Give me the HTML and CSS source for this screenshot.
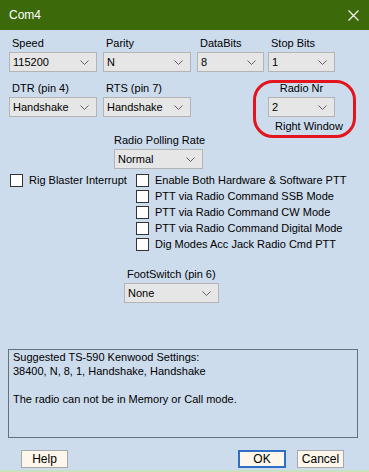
FILE: index.html
```html
<!DOCTYPE HTML>
<html>
<head>
    <meta charset="utf-8">
    <title>Com4</title>
    <link rel="stylesheet" href="styles.css">
</head>
<body>
    <div class="window">
        <div class="titlebar">
            <span class="title">Com4</span>
            <svg class="close" width="11" height="11" viewBox="0 0 11 11"><path d="M0.5 0.5 L10.5 10.5 M10.5 0.5 L0.5 10.5" stroke="#fff" stroke-width="1.1" fill="none"/></svg>
        </div>

        <div class="content">
            <!-- port settings -->
            <div class="row row-top">
                <div class="field f-speed">
                    <div class="label">Speed</div>
                    <div class="combo">115200<svg class="chev" width="9" height="5" viewBox="0 0 9 5"><path d="M0.5 0.5 L4.5 4.5 L8.5 0.5" stroke="#606060" fill="none"/></svg></div>
                </div>
                <div class="field f-parity">
                    <div class="label">Parity</div>
                    <div class="combo">N<svg class="chev" width="9" height="5" viewBox="0 0 9 5"><path d="M0.5 0.5 L4.5 4.5 L8.5 0.5" stroke="#606060" fill="none"/></svg></div>
                </div>
                <div class="field f-data">
                    <div class="label">DataBits</div>
                    <div class="combo">8<svg class="chev" width="9" height="5" viewBox="0 0 9 5"><path d="M0.5 0.5 L4.5 4.5 L8.5 0.5" stroke="#606060" fill="none"/></svg></div>
                </div>
                <div class="field f-stop">
                    <div class="label">Stop Bits</div>
                    <div class="combo">1<svg class="chev" width="9" height="5" viewBox="0 0 9 5"><path d="M0.5 0.5 L4.5 4.5 L8.5 0.5" stroke="#606060" fill="none"/></svg></div>
                </div>
            </div>

            <div class="row row-mid">
                <div class="field f-speed">
                    <div class="label">DTR (pin 4)</div>
                    <div class="combo">Handshake<svg class="chev" width="9" height="5" viewBox="0 0 9 5"><path d="M0.5 0.5 L4.5 4.5 L8.5 0.5" stroke="#606060" fill="none"/></svg></div>
                </div>
                <div class="field f-parity">
                    <div class="label">RTS (pin 7)</div>
                    <div class="combo">Handshake<svg class="chev" width="9" height="5" viewBox="0 0 9 5"><path d="M0.5 0.5 L4.5 4.5 L8.5 0.5" stroke="#606060" fill="none"/></svg></div>
                </div>
                <div class="field f-radio">
                    <div class="label center">Radio Nr</div>
                    <div class="combo">2<svg class="chev" width="9" height="5" viewBox="0 0 9 5"><path d="M0.5 0.5 L4.5 4.5 L8.5 0.5" stroke="#606060" fill="none"/></svg></div>
                    <div class="label side">Right Window</div>
                    <div class="ring"></div>
                </div>
            </div>

            <div class="field f-poll">
                <div class="label center">Radio Polling Rate</div>
                <div class="combo">Normal<svg class="chev" width="9" height="5" viewBox="0 0 9 5"><path d="M0.5 0.5 L4.5 4.5 L8.5 0.5" stroke="#606060" fill="none"/></svg></div>
            </div>

            <!-- ptt options -->
            <div class="checks">
                <div class="check-col col-left">
                    <div class="check"><span class="box"></span>Rig Blaster Interrupt</div>
                </div>
                <div class="check-col col-right">
                    <div class="check"><span class="box"></span>Enable Both Hardware &amp; Software PTT</div>
                    <div class="check"><span class="box"></span>PTT via Radio Command SSB Mode</div>
                    <div class="check"><span class="box"></span>PTT via Radio Command CW Mode</div>
                    <div class="check"><span class="box"></span>PTT via Radio Command Digital Mode</div>
                    <div class="check"><span class="box"></span>Dig Modes Acc Jack Radio Cmd PTT</div>
                </div>
            </div>

            <div class="field f-foot">
                <div class="label">FootSwitch (pin 6)</div>
                <div class="combo">None<svg class="chev" width="9" height="5" viewBox="0 0 9 5"><path d="M0.5 0.5 L4.5 4.5 L8.5 0.5" stroke="#606060" fill="none"/></svg></div>
            </div>

            <div class="notes">
                Suggested TS-590 Kenwood Settings:<br>
                38400, N, 8, 1, Handshake, Handshake<br>
                <br>
                The radio can not be in Memory or Call mode.
            </div>

            <div class="buttons">
                <div class="btn btn-help">Help</div>
                <div class="btn btn-ok">OK</div>
                <div class="btn btn-cancel">Cancel</div>
            </div>
        </div>
    </div>
</body>
</html>
```
FILE: styles.css
```css
body {
    margin: 0;
    background-color: #CDDCEC;
    font-family: "Liberation Sans", Arial, sans-serif;
    font-size: 11px;
    color: #000;
}

.window {
    width: 369px;
    height: 472px;
    box-sizing: border-box;
    border-bottom: 2px solid #C4E3BE;
}

.titlebar {
    height: 30px;
    background-color: #3C6A0B;
    display: flex;
    align-items: center;
    justify-content: space-between;
    padding: 0 10px 0 9px;
}

    .titlebar .title {
        color: #fff;
        font-size: 12px;
    }

.content {
    padding-left: 9px;
}

.row {
    display: flex;
}

.row-top {
    margin-top: 6px;
}

.row-mid {
    margin-top: 9px;
}

.field {
    position: relative;
}

.label {
    height: 14px;
    line-height: 14px;
    padding-left: 3px;
    margin-bottom: 2px;
    white-space: nowrap;
}

    .label.center {
        padding-left: 0;
        text-align: center;
    }

    .label.side {
        margin: 2px 0 0 4px;
    }

.combo {
    position: relative;
    height: 20px;
    line-height: 18px;
    box-sizing: border-box;
    border: 1px solid #B4B4B4;
    background-color: #E6E6E6;
    padding-left: 3px;
}

    .combo .chev {
        position: absolute;
        right: 7px;
        top: 7px;
    }

.f-speed { width: 88px; }
.f-parity { width: 88px; margin-left: 6px; }
.f-data { width: 67px; margin-left: 6px; }
.f-stop { width: 67px; margin-left: 4px; }

.f-radio {
    width: 67px;
    margin-left: 77px;
}

.ring {
    position: absolute;
    left: -15px;
    top: -1px;
    width: 103px;
    height: 58px;
    box-sizing: border-box;
    border: 3px solid #E3141E;
    border-radius: 20px;
}

.f-poll {
    width: 89px;
    margin-left: 105px;
}

.checks {
    display: flex;
    margin-top: 3px;
}

.check-col {
    display: flex;
    flex-direction: column;
}

.col-left {
    width: 126px;
}

.check {
    height: 16px;
    display: flex;
    align-items: center;
    white-space: nowrap;
}

    .check .box {
        width: 13px;
        height: 13px;
        box-sizing: border-box;
        border: 1px solid #333;
        background-color: #fff;
        margin: 0 6px 0 1px;
    }

.f-foot {
    width: 95px;
    margin: 15px 0 0 115px;
}

.notes {
    margin: 46px 0 0 -1px;
    width: 350px;
    height: 89px;
    box-sizing: border-box;
    border: 1px solid #66707A;
    padding: 0 0 0 4px;
    line-height: 14px;
}

.buttons {
    display: flex;
    margin-top: 12px;
}

.btn {
    height: 18px;
    line-height: 16px;
    box-sizing: border-box;
    border: 1px solid #A8A8A8;
    background-color: #FCF7EA;
    text-align: center;
    font-size: 12px;
}

.btn-help {
    width: 47px;
    margin-left: 12px;
}

.btn-ok {
    width: 48px;
    margin-left: 170px;
    border: 2px solid #2E6FC4;
    line-height: 14px;
}

.btn-cancel {
    width: 47px;
    margin-left: 11px;
}
```
